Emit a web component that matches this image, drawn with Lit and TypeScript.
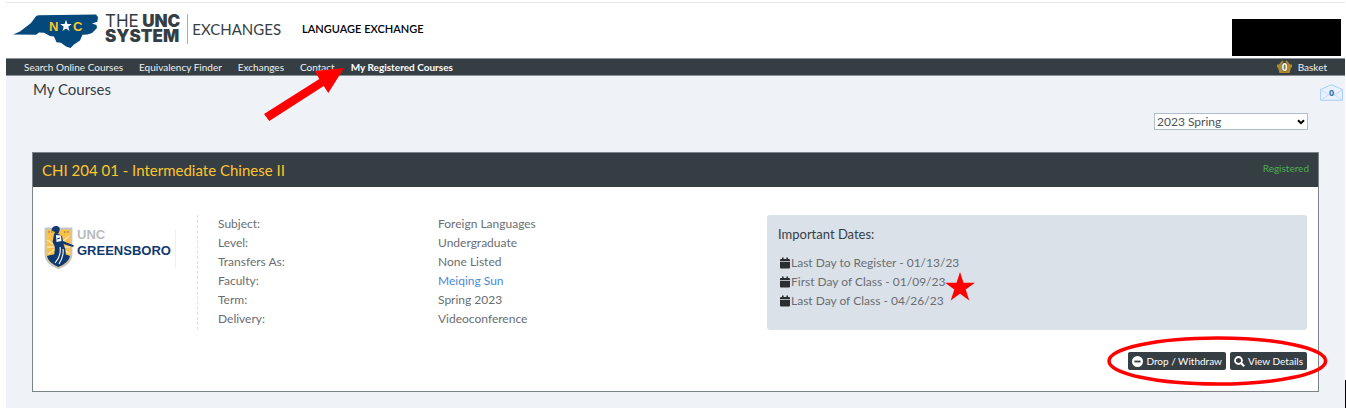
import { LitElement, html, css, svg } from "lit";
import { customElement } from "lit/decorators.js";

const navLinks = ["Search Online Courses", "Equivalency Finder", "Exchanges", "Contact"];

const details: Array<[string, string, boolean]> = [
  ["Subject:", "Foreign Languages", false],
  ["Level:", "Undergraduate", false],
  ["Transfers As:", "None Listed", false],
  ["Faculty:", "Meiqing Sun", true],
  ["Term:", "Spring 2023", false],
  ["Delivery:", "Videoconference", false],
];

const dates = [
  { text: "Last Day to Register - 01/13/23", starred: false },
  { text: "First Day of Class - 01/09/23", starred: true },
  { text: "Last Day of Class - 04/26/23", starred: false },
];

const starPoints = "15,0 18.5,10.7 30,10.7 20.7,17.4 24.3,28.6 15,21.7 5.7,28.6 9.3,17.4 0,10.7 11.5,10.7";

@customElement("site-header")
export class SiteHeader extends LitElement {
  static styles = css`
    :host { display: block; }
    .bar {
      display: flex;
      align-items: center;
      height: 55px;
      padding: 0 4px 0 6px;
      border-top: 1px solid #e4e4e4;
      background: #fff;
    }
    .state { width: 88px; height: 36px; }
    .brand {
      margin: 0 0 3px 5px;
      padding-right: 7px;
      border-right: 1px solid #a9b0b3;
      font: 900 17px/15px Inter, sans-serif;
      color: #353e43;
    }
    .brand span { display: block; }
    .brand .light { display: inline; font-weight: 400; }
    .unit { margin: 0 0 3px 4px; font: 15px/20px Lato, sans-serif; color: #353e43; }
    .section { margin: 0 0 3px 21px; font: 600 11px/16px Lato, sans-serif; color: #000; }
    .account { width: 109px; height: 37px; margin: 14px 0 0 auto; background: #000; }
  `;
  render() {
    return html`
      <header class="bar">
        <svg class="state" viewBox="0 0 88 36" aria-hidden="true">
          <path fill="#04497c" d="M1 21.5 L8 18.5 L19 10 L24 3.2 Q25 2.2 27 2.2 L84 1.5 L86 4 L85.3 8.7 L80 10.5 L84.5 12 L85 15 L80 20 L75.5 21.5 L70.5 21.8 L68 27.5 L62 31.5 L58.5 35 L54 33.5 L49 29.8 L44.5 29.2 L42 23.5 L38 23 L32 19.8 L27 19.6 L24 21.7 Z"/>
          <polygon fill="#fff" points="54,6.8 55.4,10.9 59.7,11 56.3,13.7 57.5,17.9 54,15.4 50.5,17.9 51.7,13.7 48.3,11 52.6,10.9"/>
          <text x="37" y="17.5" font-family="Liberation Sans" font-weight="700" font-size="13" fill="#fdc52f">N</text>
          <text x="61" y="17.5" font-family="Liberation Sans" font-weight="700" font-size="13" fill="#fdc52f">C</text>
        </svg>
        <div class="brand"><span><span class="light">THE</span> UNC</span><span>SYSTEM</span></div>
        <div class="unit">EXCHANGES</div>
        <div class="section">LANGUAGE EXCHANGE</div>
        <div class="account"></div>
      </header>
    `;
  }
}

@customElement("site-nav")
export class SiteNav extends LitElement {
  static styles = css`
    :host { display: block; position: relative; z-index: 1; }
    .bar {
      display: flex;
      align-items: center;
      gap: 16px;
      height: 16px;
      padding: 0 18px;
      border: 1px solid #8b9195;
      border-width: 1px 0;
      background: #353e43;
      font: 10px/16px Lato, sans-serif;
    }
    a { color: #f0f2f3; text-decoration: none; white-space: nowrap; }
    .current { position: relative; color: #fff; font-weight: 700; }
    .arrow { position: absolute; right: 100%; top: 8px; width: 80px; height: 56px; margin-right: 7px; }
    .basket { display: flex; align-items: center; gap: 6px; margin-left: auto; }
    .basket svg { width: 15px; height: 14px; }
  `;
  render() {
    return html`
      <nav class="bar">
        ${navLinks.map((label) => html`<a href="#">${label}</a>`)}
        <a class="current" href="#" aria-current="page">My Registered Courses
          <svg class="arrow" viewBox="0 0 80 56" aria-hidden="true">
            <polygon fill="#f00" points="0,47 55.3,12 50.7,4 80,1 64.3,26 59.7,19 5.3,54" />
          </svg>
        </a>
        <a class="basket" href="#">
          <svg viewBox="0 0 15 14" aria-hidden="true">
            <path d="M2 6 L6 1 M13 6 L9 1" stroke="#b08a2c" stroke-width="2" fill="none" />
            <path fill="#b08a2c" d="M0 4.5 H15 V7.5 H14 L12.5 13 H2.5 L1 7.5 H0 Z" />
            <text x="7.5" y="11" text-anchor="middle" font-family="Open Sans" font-size="10" font-weight="700" fill="#fff" stroke="#5b5236" stroke-width="1" paint-order="stroke">0</text>
          </svg>
          Basket
        </a>
      </nav>
    `;
  }
}

@customElement("course-card")
export class CourseCard extends LitElement {
  static styles = css`
    :host { display: block; }
    .card { border: 1px solid #7d8487; background: #fff; color: #6a6e71; }
    .head {
      display: flex;
      justify-content: space-between;
      height: 34px;
      padding: 0 9px;
      background: #353e43;
    }
    h2 { margin: 0; font-size: 15px; line-height: 34px; font-weight: 400; color: #fdc52f; }
    .status { font-size: 10px; line-height: 30px; color: #4caf50; }
    .body { display: flex; padding: 28px 11px 0; }
    .school { flex: 0 0 154px; box-sizing: border-box; border-right: 1px dashed #dcdfe6; padding-top: 10px; }
    .logo { display: block; width: 134px; height: 46px; }
    dl {
      display: grid;
      grid-template-columns: 220px 1fr;
      grid-auto-rows: 19px;
      flex: 1 1 0;
      margin: 0;
      padding-left: 20px;
      font-size: 12px;
      line-height: 18px;
    }
    dt, dd { margin: 0; }
    dd a { color: #4a89d8; text-decoration: none; }
    .dates {
      flex: 0 0 49%;
      max-width: 540px;
      box-sizing: border-box;
      padding: 9px 11px 20px;
      border-radius: 3px;
      background: #dbe1e9;
    }
    h3 { margin: 0 0 9px; font-size: 13px; line-height: 20px; font-weight: 400; color: #353e43; }
    ul { margin: 0; padding: 0 0 0 2px; list-style: none; font-size: 12px; line-height: 19px; }
    li { display: flex; align-items: center; }
    li svg { flex: none; }
    .cal { width: 10px; height: 12px; margin-right: 1px; }
    .starred { position: relative; }
    .star { position: absolute; left: 100%; top: 0; width: 30px; height: 29px; }
    .actions {
      position: relative;
      display: flex;
      gap: 4px;
      width: fit-content;
      margin: 22px 11px 21px auto;
    }
    button {
      display: flex;
      align-items: center;
      gap: 3px;
      height: 18px;
      padding: 0 4px;
      border: 0;
      border-radius: 2px;
      background: #353e43;
      color: #fff;
      font: 10px/18px Lato, sans-serif;
      white-space: nowrap;
    }
    button svg { width: 11px; height: 11px; }
    .ring { position: absolute; inset: -16px -21px; width: calc(100% + 42px); height: 50px; pointer-events: none; }
  `;
  render() {
    return html`
      <article class="card">
        <header class="head">
          <h2>CHI 204 01 - Intermediate Chinese II</h2>
          <span class="status">Registered</span>
        </header>
        <div class="body">
          <div class="school">
            <svg class="logo" viewBox="0 0 134 46" role="img" aria-label="UNC Greensboro">
              <path d="M1.5 3.5 H27.5 V30 Q27.5 38 14.5 43.5 Q1.5 38 1.5 30 Z" fill="#fbc04a" stroke="#c3c6c9" stroke-width="1.8" />
              <path d="M14 22 L3 15 M14 22 L3 22 M14 22 L4 29 M16 22 L26 22 M16 22 L26 29 M15 20 L25 11" stroke="#fde6b0" stroke-width="1.4" />
              <path d="M3 31 Q9 28.5 14 30 Q21 28 26 31 Q25 37.5 14.5 42 Q4 37.5 3 31 Z" fill="#0f396f" />
              <path d="M4 7 H9 M20 7 H25" stroke="#a88640" stroke-width="1.4" stroke-dasharray="1.5 1.5" />
              <path d="M8 3.5 Q9 .5 12.5 1 Q16.5 1.5 15.5 5.5 Q15.2 8 13.5 8.5 L18 11 L19 16 L30 20.5 L29 22 L19.5 19 Q22.5 25 21.5 33 L13 41 L7 36.5 Q12 28 10.5 21 L8.5 17 L10 9.5 L11 7 L7.5 5.5 Z" fill="#0f396f" />
              <path d="M12 10 L17 10.5 L17.5 16 L12.5 17 Z" fill="#fff" />
              <path d="M13 14 L16 13 M12.5 19 L18 18" stroke="#0f396f" stroke-width="1" />
              <path d="M16 22 Q17.5 31 11 38 M19 24 Q20 31 15 39" stroke="#fff" stroke-width="1.1" fill="none" />
              <text x="33" y="14" font-family="Liberation Sans" font-size="13" font-weight="700" fill="#b9bbbe">UNC</text>
              <text x="33" y="30" font-family="Liberation Sans" font-size="13" font-weight="700" fill="#0f396f">GREENSBORO</text>
              <path d="M131.5 4 V43" stroke="#fdefd4" stroke-width="1.2" />
            </svg>
          </div>
          <dl>
            ${details.map(([name, value, link]) => html`
              <dt>${name}</dt>
              <dd>${link ? html`<a href="#">${value}</a>` : value}</dd>
            `)}
          </dl>
          <section class="dates">
            <h3>Important Dates:</h3>
            <ul>
              ${dates.map((d) => html`
                <li>
                  <svg class="cal" viewBox="0 0 10 12" aria-hidden="true">
                    <path fill="#2b2e30" d="M2 .5 H3.6 V2 H6.4 V.5 H8 V2 H9 Q10 2 10 3 V4 H0 V3 Q0 2 1 2 H2 Z M0 4.8 H10 V10.6 Q10 11.6 9 11.6 H1 Q0 11.6 0 10.6 Z" />
                  </svg>
                  <span class=${d.starred ? "starred" : ""}>${d.text}${d.starred
                    ? html`<svg class="star" viewBox="0 0 30 29" aria-hidden="true">${svg`<polygon fill="#f00" points=${starPoints} />`}</svg>`
                    : ""}</span>
                </li>
              `)}
            </ul>
          </section>
        </div>
        <div class="actions">
          <button type="button">
            <svg viewBox="0 0 11 11" aria-hidden="true">
              <circle cx="5.5" cy="5.5" r="5.5" fill="#fff" />
              <path d="M2.4 5.5 H8.6" stroke="#353e43" stroke-width="1.8" />
            </svg>
            Drop / Withdraw
          </button>
          <button type="button">
            <svg viewBox="0 0 11 11" aria-hidden="true">
              <circle cx="4.5" cy="4.5" r="3.5" fill="none" stroke="#fff" stroke-width="1.8" />
              <path d="M7 7 L10.2 10.2" stroke="#fff" stroke-width="2.2" />
            </svg>
            View Details
          </button>
          <svg class="ring" viewBox="0 0 220 50" preserveAspectRatio="none" aria-hidden="true">
            <ellipse cx="110" cy="25" rx="108" ry="23" fill="none" stroke="#f00" stroke-width="3.5" />
          </svg>
        </div>
      </article>
    `;
  }
}

@customElement("app-root")
export class AppRoot extends LitElement {
  static styles = css`
    :host {
      display: block;
      padding: 2px 1px 0 6px;
      background: #fff;
      font-family: Lato, sans-serif;
    }
    .page {
      position: relative;
      box-sizing: border-box;
      min-height: calc(100vh - 76px);
      padding: 3px 26px 16px;
      background: #eff2f6;
    }
    .title { display: flex; align-items: flex-start; justify-content: space-between; padding-left: 1px; }
    h1 { margin: 0; font-size: 15px; line-height: 20px; font-weight: 400; color: #353e43; }
    .mail { width: 23px; height: 17px; margin: 5px -24px 0 0; }
    .filter { position: relative; width: 154px; margin: 12px 11px 22px auto; }
    select {
      display: block;
      appearance: none;
      width: 100%;
      height: 17px;
      padding: 0 2px;
      border: 1px solid #aebccb;
      border-radius: 0;
      background: #fff;
      color: #4c5256;
      font: 12px/15px Lato, sans-serif;
    }
    .chevron { position: absolute; right: 3px; top: 6px; width: 8px; height: 6px; pointer-events: none; }
    .caret { position: absolute; right: -1px; bottom: 0; width: 1px; height: 28px; background: #000; }
  `;
  render() {
    return html`
      <site-header></site-header>
      <site-nav></site-nav>
      <main class="page">
        <div class="title">
          <h1>My Courses</h1>
          <svg class="mail" viewBox="0 0 23 17" role="img" aria-label="Messages">
            <path d="M.6 5.5 L11.5 .7 L22.4 5.5 V16.3 H.6 Z" fill="#e9f1ff" stroke="#a9d0f5" />
            <path d="M1 6 L9 11 M22 6 L14 11 M1 16 L9 10.5 Q11.5 9 14 10.5 L22 16" fill="none" stroke="#c5dcf6" />
            <text x="11.5" y="11.5" text-anchor="middle" font-family="Open Sans" font-weight="700" font-size="9" fill="#2f74ad">0</text>
          </svg>
        </div>
        <div class="filter">
          <select aria-label="Term"><option>2023 Spring</option></select>
          <svg class="chevron" viewBox="0 0 8 6" aria-hidden="true"><path d="M1 1.2 L4 4.2 L7 1.2" fill="none" stroke="#000" stroke-width="2" /></svg>
        </div>
        <course-card></course-card>
        <div class="caret"></div>
      </main>
    `;
  }
}
